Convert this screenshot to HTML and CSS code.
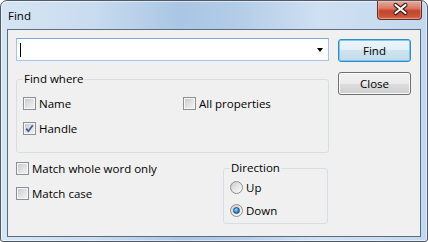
FILE: index.html
```html
<!DOCTYPE html>
<html lang="en">
<head>
  <meta charset="UTF-8" />
  <title>Find</title>
  <link rel="stylesheet" href="styles.css">
</head>
<body>
  <div class="window">
    <div class="titlebar">
      <span class="title">Find</span>
      <span class="close-btn">
        <svg width="45" height="19" viewBox="0 0 45 19">
          <path d="M18.5 5 L28.5 13 M28.5 5 L18.5 13" stroke="#3a1a16" stroke-width="4.2" stroke-linecap="round" fill="none"/>
          <path d="M18.5 5 L28.5 13 M28.5 5 L18.5 13" stroke="#fff" stroke-width="2.2" stroke-linecap="round" fill="none"/>
        </svg>
      </span>
    </div>

    <div class="client">
      <div class="top">
        <div class="main">
          <div class="combo"><span class="caret"></span><span class="arrow"></span></div>

          <fieldset class="group where">
            <legend>Find where</legend>
            <div class="where-grid">
              <label class="check"><span class="box"></span>Name</label>
              <label class="check"><span class="box"></span>All properties</label>
              <label class="check">
                <span class="box">
                  <svg width="11" height="11" viewBox="0 0 11 11"><path d="M2.2 5.6 L4.4 8.2 L8.8 2.2" stroke="#3f5a99" stroke-width="1.7" fill="none"/></svg>
                </span>Handle
              </label>
            </div>
          </fieldset>
        </div>

        <div class="buttons">
          <button class="btn default">Find</button>
          <button class="btn">Close</button>
        </div>
      </div>

      <div class="bottom">
        <div class="options">
          <label class="check"><span class="box"></span>Match whole word only</label>
          <label class="check"><span class="box"></span>Match case</label>
        </div>

        <fieldset class="group direction">
          <legend>Direction</legend>
          <label class="radio"><span class="dot"></span>Up</label>
          <label class="radio"><span class="dot on"></span>Down</label>
        </fieldset>
      </div>
    </div>
  </div>
</body>
</html>
```

FILE: styles.css
```css
body {
  margin: 0;
  font-family: "Open Sans", "Liberation Sans", sans-serif;
  font-size: 11.5px;
  color: #000;
}
.window {
  width: 428px;
  height: 242px;
  box-sizing: border-box;
  border: 1px solid #4f5968;
  border-radius: 7px 7px 3px 3px;
  padding: 0 6px 4px 6px;
  background: linear-gradient(90deg, #d6e5f4 0%, #c8dbef 22%, #aac6e4 42%, #b2cce7 55%, #cfe0f2 75%, #c3d8ee 100%);
  box-shadow: inset 0 0 0 1px rgba(255, 255, 255, 0.55);
}
.titlebar {
  height: 28px;
  display: flex;
  justify-content: space-between;
  align-items: flex-start;
  margin-right: -1px;
}
.title {
  padding: 7px 0 0 1px;
  line-height: 16px;
}
.close-btn {
  display: block;
  width: 45px;
  height: 19px;
  box-sizing: border-box;
  border: 1px solid #6a2b22;
  border-top: none;
  border-radius: 0 0 4px 4px;
  background: linear-gradient(#e9ab9c 0%, #d97a66 40%, #c4452e 55%, #c9533a 85%, #d8775f 100%);
  box-shadow: inset 0 0 0 1px rgba(255, 220, 210, 0.35);
}
.close-btn svg {
  display: block;
  margin: -1px 0 0 -1px;
}
.client {
  height: 208px;
  box-sizing: border-box;
  border: 1px solid #5b6d82;
  background: #f0f0f0;
  padding: 8px 0 0 8px;
}
.top {
  display: flex;
  align-items: flex-start;
}
.main {
  width: 313px;
}
.combo {
  height: 23px;
  box-sizing: border-box;
  border: 1px solid #a3c4e4;
  border-top-color: #7ea9d6;
  background: #fff;
  display: flex;
  align-items: center;
  padding: 0 5px 0 3px;
}
.caret {
  width: 1px;
  height: 14px;
  background: #000;
}
.arrow {
  margin-left: auto;
  border-top: 4px solid #000;
  border-left: 3.5px solid transparent;
  border-right: 3.5px solid transparent;
}
.group {
  margin: 0;
  min-width: 0;
  box-sizing: border-box;
  border: 1px solid #d5dfe5;
  border-radius: 3px;
}
.group legend {
  padding: 0 1px;
  line-height: 16px;
}
.where {
  margin-top: 10px;
  padding: 10px 6px 17px 6px;
}
.where-grid {
  display: grid;
  grid-template-columns: 160px auto;
  row-gap: 12px;
}
.check, .radio {
  display: flex;
  align-items: center;
  gap: 3px;
  height: 13px;
  line-height: 13px;
  white-space: nowrap;
}
.box {
  width: 13px;
  height: 13px;
  box-sizing: border-box;
  border: 1px solid #8e8f8f;
  background: linear-gradient(135deg, #c3c7cc 0%, #e4e5e7 60%, #f2f2f2 100%);
  box-shadow: inset 0 0 0 1px #f6f6f6;
  flex: none;
}
.box svg {
  display: block;
}
.buttons {
  margin-left: 9px;
  padding-top: 1px;
  display: flex;
  flex-direction: column;
  gap: 10px;
}
.btn {
  width: 73px;
  height: 23px;
  box-sizing: border-box;
  border: 1px solid #707070;
  border-radius: 3px;
  font: inherit;
  color: #000;
  padding: 0;
  background: linear-gradient(#f2f2f2 0%, #ebebeb 50%, #dddddd 50%, #cfcfcf 100%);
  box-shadow: inset 0 0 0 1px #fbfbfb;
}
.btn.default {
  border-color: #3a86c4;
  background: linear-gradient(#edf5fa 0%, #e2eef6 50%, #cfe3ef 50%, #c2dbea 100%);
  box-shadow: inset 0 0 0 1px #6fcdf3;
}
.bottom {
  width: 313px;
  margin-top: 7px;
  display: flex;
  align-items: flex-start;
}
.options {
  padding-top: 2px;
  display: flex;
  flex-direction: column;
  gap: 12px;
}
.direction {
  width: 105px;
  margin-left: auto;
  margin-right: 1px;
  padding: 5px 6px 6px 6px;
  display: flex;
  flex-direction: column;
  gap: 10px;
}
.dot {
  width: 13px;
  height: 13px;
  box-sizing: border-box;
  border-radius: 50%;
  border: 1px solid #8e8f8f;
  background: linear-gradient(135deg, #c9cbce 0%, #e8e8e9 55%, #fbfbfb 100%);
  display: flex;
  align-items: center;
  justify-content: center;
  flex: none;
}
.dot.on::after {
  content: "";
  width: 7px;
  height: 7px;
  box-sizing: border-box;
  border-radius: 50%;
  border: 1px solid #1d4f86;
  background: radial-gradient(circle at 40% 35%, #a9dcff 0%, #3c93dc 45%, #0d4f9e 100%);
}
```
